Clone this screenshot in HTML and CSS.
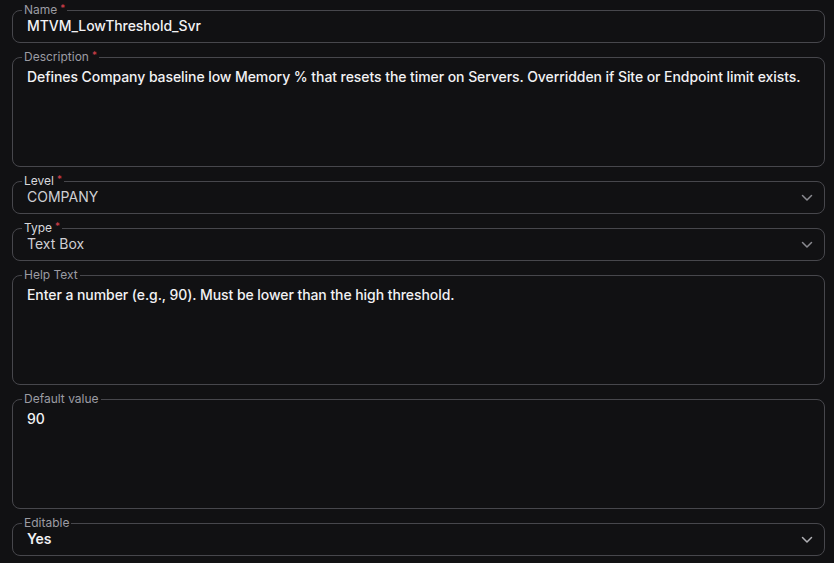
FILE: index.html
```html
<!DOCTYPE html>
<html>
<head>
<meta charset="utf-8">
<link rel="stylesheet" href="styles.css">
</head>
<body>
<form class="form">
  <fieldset class="field">
    <legend class="label">Name<span class="req">*</span></legend>
    <div class="value strong">MTVM_LowThreshold_Svr</div>
  </fieldset>
  <fieldset class="field">
    <legend class="label">Description<span class="req">*</span></legend>
    <div class="area strong">Defines Company baseline low Memory % that resets the timer on Servers. Overridden if Site or Endpoint limit exists.</div>
  </fieldset>
  <fieldset class="field">
    <legend class="label bright">Level<span class="req">*</span></legend>
    <div class="select">
      <div class="value muted">COMPANY</div>
      <svg class="chev" width="12" height="8" viewBox="0 0 12 8"><path d="M1.5 1.5 6 6l4.5-4.5" fill="none" stroke="#8a8a90" stroke-width="1.5" stroke-linecap="round" stroke-linejoin="round"/></svg>
    </div>
  </fieldset>
  <fieldset class="field">
    <legend class="label bright">Type<span class="req">*</span></legend>
    <div class="select">
      <div class="value muted">Text Box</div>
      <svg class="chev" width="12" height="8" viewBox="0 0 12 8"><path d="M1.5 1.5 6 6l4.5-4.5" fill="none" stroke="#8a8a90" stroke-width="1.5" stroke-linecap="round" stroke-linejoin="round"/></svg>
    </div>
  </fieldset>
  <fieldset class="field">
    <legend class="label">Help Text</legend>
    <div class="area strong">Enter a number (e.g., 90). Must be lower than the high threshold.</div>
  </fieldset>
  <fieldset class="field">
    <legend class="label">Default value</legend>
    <div class="area strong">90</div>
  </fieldset>
  <fieldset class="field">
    <legend class="label">Editable</legend>
    <div class="select">
      <div class="value strong bold">Yes</div>
      <svg class="chev" width="12" height="8" viewBox="0 0 12 8"><path d="M1.5 1.5 6 6l4.5-4.5" fill="none" stroke="#b0b0b5" stroke-width="1.5" stroke-linecap="round" stroke-linejoin="round"/></svg>
    </div>
  </fieldset>
</form>
</body>
</html>
```
FILE: styles.css
```css
html, body {
  margin: 0;
  padding: 0;
  background: #111113;
}
body {
  font-family: Inter, "Noto Sans", sans-serif;
  width: 834px;
  height: 563px;
  overflow: hidden;
}
.form {
  display: flex;
  flex-direction: column;
  gap: 7px;
  padding: 3px 9px 0 12px;
}
.field {
  margin: 0;
  border: 1px solid #47474c;
  border-radius: 8px;
  padding: 0 0 7px 9px;
  min-width: 0;
}
.label {
  padding: 0 2px;
  font-size: 12px;
  line-height: 14px;
  color: #9c9ca3;
}
.label.bright {
  color: #d8d8dc;
}
.req {
  color: #d9404c;
  font-size: 10px;
  margin-left: 3px;
  position: relative;
  top: -2px;
}
.value {
  font-size: 14px;
  line-height: 18px;
  padding-left: 5px;
}
.strong {
  color: #f2f2f4;
  font-weight: 500;
  letter-spacing: -0.07px;
}
.bold {
  font-weight: 600;
}
.muted {
  color: #cfcfd3;
  font-weight: 400;
}
.area {
  font-size: 14px;
  line-height: 18px;
  padding: 4px 0 0 5px;
  height: 91px;
}
.select {
  display: flex;
  align-items: center;
  justify-content: space-between;
  padding-right: 11px;
}
.chev {
  display: block;
  margin-top: 2px;
}
```
